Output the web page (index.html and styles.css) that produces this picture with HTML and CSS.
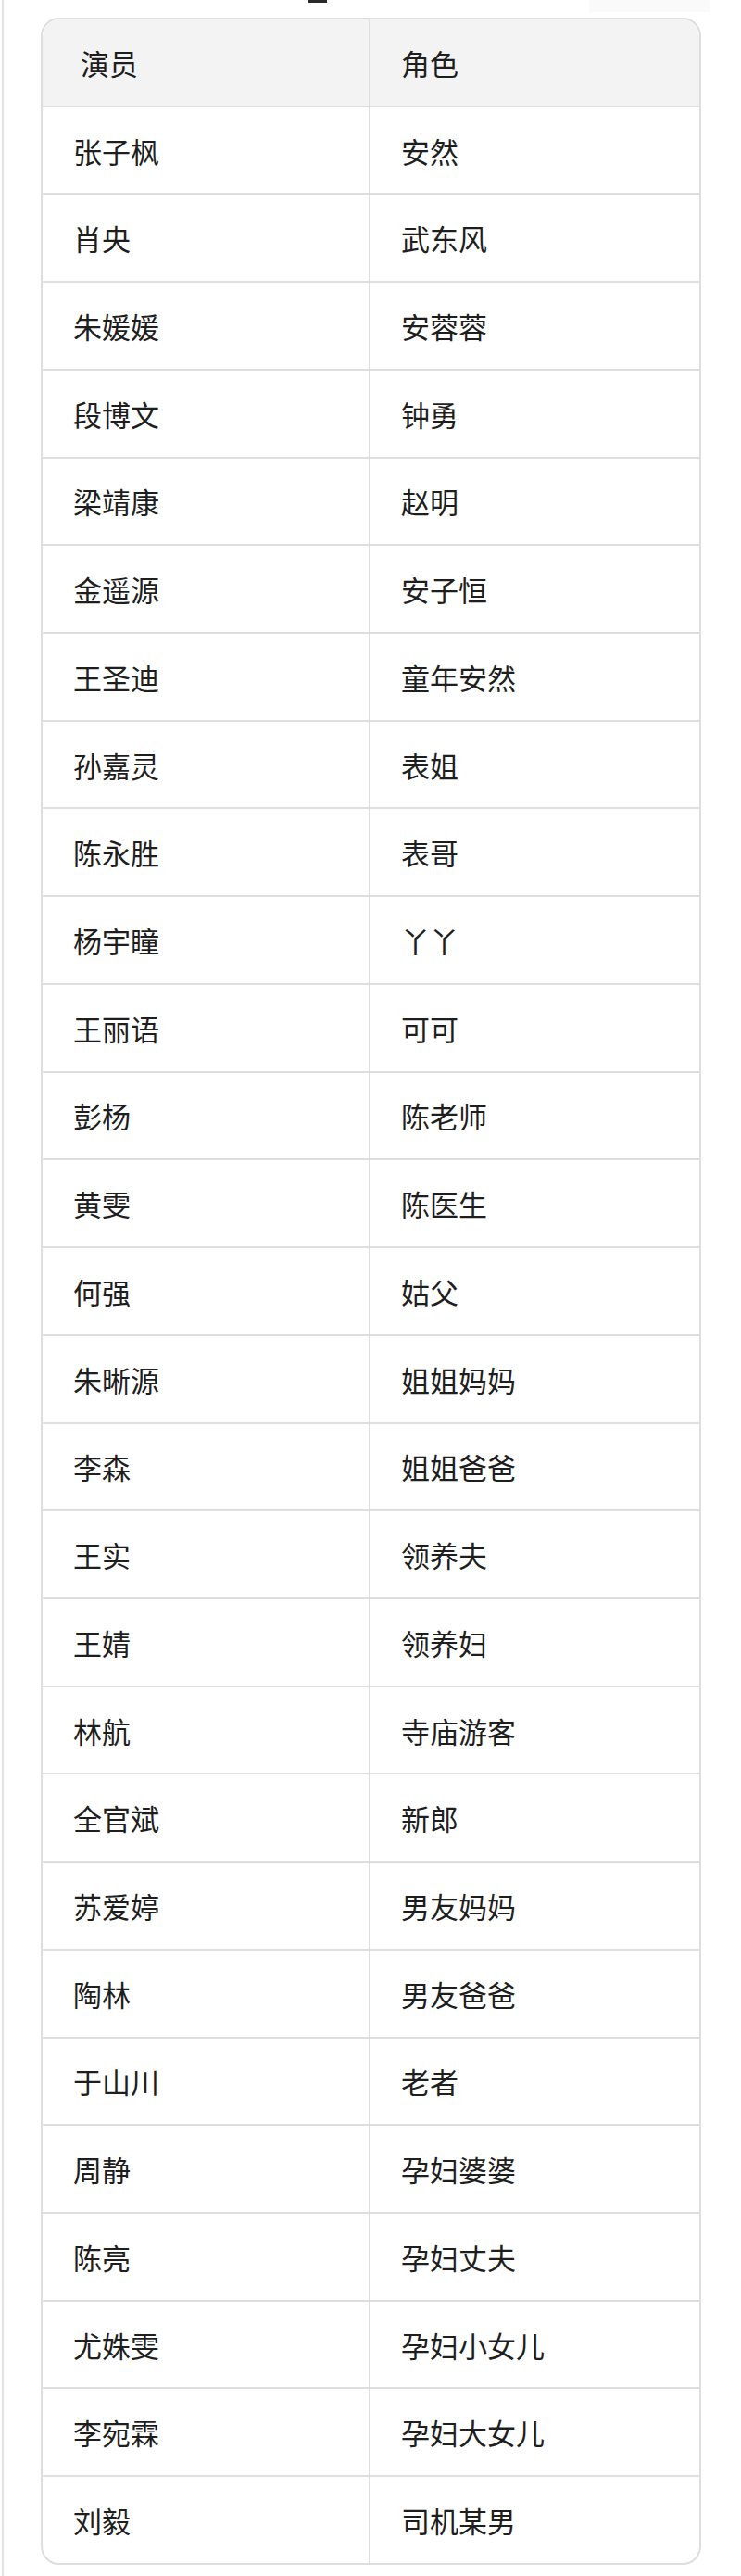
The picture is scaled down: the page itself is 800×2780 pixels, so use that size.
FILE: index.html
```html
<!DOCTYPE html>
<html lang="zh-CN">
<head>
<meta charset="utf-8">
<title>演员表</title>
<link rel="stylesheet" href="styles.css">
</head>
<body>
<div class="page">
  <div class="top-strip">
    <span class="cut-glyph"></span>
    <span class="cut-shade"></span>
  </div>
  <div class="table-card">
    <table class="cast">
      <thead>
        <tr><th class="c1 h1">演员</th><th class="c2">角色</th></tr>
      </thead>
      <tbody>
        <tr><td class="c1">张子枫</td><td class="c2">安然</td></tr>
        <tr><td class="c1">肖央</td><td class="c2">武东风</td></tr>
        <tr><td class="c1">朱媛媛</td><td class="c2">安蓉蓉</td></tr>
        <tr><td class="c1">段博文</td><td class="c2">钟勇</td></tr>
        <tr><td class="c1">梁靖康</td><td class="c2">赵明</td></tr>
        <tr><td class="c1">金遥源</td><td class="c2">安子恒</td></tr>
        <tr><td class="c1">王圣迪</td><td class="c2">童年安然</td></tr>
        <tr><td class="c1">孙嘉灵</td><td class="c2">表姐</td></tr>
        <tr><td class="c1">陈永胜</td><td class="c2">表哥</td></tr>
        <tr><td class="c1">杨宇瞳</td><td class="c2">丫丫</td></tr>
        <tr><td class="c1">王丽语</td><td class="c2">可可</td></tr>
        <tr><td class="c1">彭杨</td><td class="c2">陈老师</td></tr>
        <tr><td class="c1">黄雯</td><td class="c2">陈医生</td></tr>
        <tr><td class="c1">何强</td><td class="c2">姑父</td></tr>
        <tr><td class="c1">朱晰源</td><td class="c2">姐姐妈妈</td></tr>
        <tr><td class="c1">李森</td><td class="c2">姐姐爸爸</td></tr>
        <tr><td class="c1">王实</td><td class="c2">领养夫</td></tr>
        <tr><td class="c1">王婧</td><td class="c2">领养妇</td></tr>
        <tr><td class="c1">林航</td><td class="c2">寺庙游客</td></tr>
        <tr><td class="c1">全官斌</td><td class="c2">新郎</td></tr>
        <tr><td class="c1">苏爱婷</td><td class="c2">男友妈妈</td></tr>
        <tr><td class="c1">陶林</td><td class="c2">男友爸爸</td></tr>
        <tr><td class="c1">于山川</td><td class="c2">老者</td></tr>
        <tr><td class="c1">周静</td><td class="c2">孕妇婆婆</td></tr>
        <tr><td class="c1">陈亮</td><td class="c2">孕妇丈夫</td></tr>
        <tr><td class="c1">尤姝雯</td><td class="c2">孕妇小女儿</td></tr>
        <tr><td class="c1">李宛霖</td><td class="c2">孕妇大女儿</td></tr>
        <tr><td class="c1">刘毅</td><td class="c2">司机某男</td></tr>
      </tbody>
    </table>
  </div>
</div>
</body>
</html>
```

FILE: styles.css
```css
html, body {
  margin: 0;
  padding: 0;
  background: #ffffff;
}

body {
  font-family: "Noto Sans CJK SC", "Noto Sans", sans-serif;
  color: #1e1e1e;
}

.page {
  margin-left: 2px;
  border-left: 2px solid #e4e4e4;
  min-height: 2780px;
  box-sizing: border-box;
}

.top-strip {
  height: 19px;
  display: flex;
  align-items: flex-start;
}

.cut-glyph {
  display: block;
  width: 20px;
  height: 3px;
  margin-left: 329px;
  background: #2a2a2a;
}

.cut-shade {
  display: block;
  width: 130px;
  height: 13px;
  margin-left: 283px;
  background: #fafafa;
}

.table-card {
  margin-left: 40px;
  width: 713px;
  box-sizing: border-box;
  border: 2px solid #dedede;
  border-radius: 20px;
  overflow: hidden;
}

.cast {
  width: 100%;
  border-collapse: separate;
  border-spacing: 0;
  table-layout: fixed;
}

.cast th,
.cast td {
  height: 92.72px;
  padding: 0;
  font-size: 31px;
  font-weight: 400;
  line-height: 1;
  text-align: left;
  vertical-align: middle;
  border-bottom: 2px solid #dedede;
  box-sizing: content-box;
}

.cast tbody tr:last-child td {
  border-bottom: none;
}

.cast thead th {
  background: #f3f3f3;
}

.cast .c1 {
  width: 319px;
  padding-left: 33px;
  border-right: 2px solid #dedede;
}

.cast .h1 {
  padding-left: 41px;
  width: 311px;
}

.cast .c2 {
  padding-left: 33px;
}
```
